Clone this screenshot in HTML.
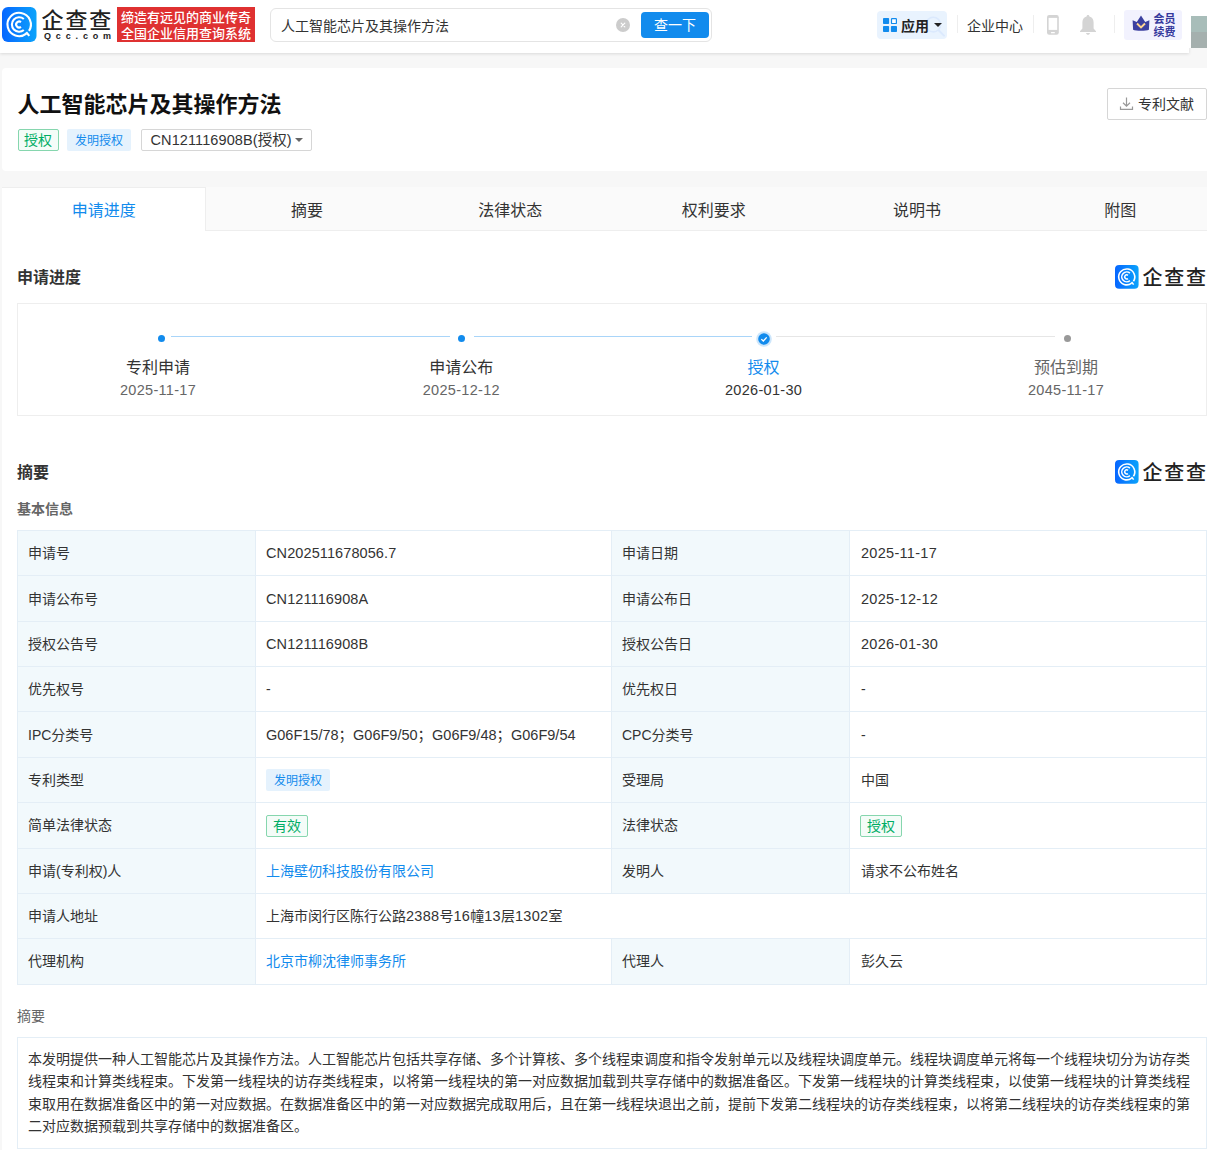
<!DOCTYPE html>
<html lang="zh-CN">
<head>
<meta charset="utf-8">
<title>人工智能芯片及其操作方法 - 企查查</title>
<style>
*{box-sizing:border-box;margin:0;padding:0}
html,body{width:1207px;height:1150px;overflow:hidden;background:#f7f7f7}
body{position:relative;font-family:"Liberation Sans","Noto Sans CJK SC",sans-serif;font-size:14px;color:#333;line-height:1.6}
a{color:#128bed;text-decoration:none}
.abs{position:absolute}
.ls{letter-spacing:.1px;font-size:14.5px}
.ld{letter-spacing:.3px;font-size:14.5px}

/* header */
#hd{position:absolute;left:0;top:0;width:1189px;height:53px;background:#fff;box-shadow:0 1px 3px rgba(0,0,0,.12)}
#hdr{position:absolute;left:1189px;top:0;width:18px;height:48px;background:#fff}
#avatar{position:absolute;left:1191px;top:16px;width:16px;height:32px;background:linear-gradient(#a8bdb9 0,#a8bdb9 50%,#a5b0ae 50%,#a5b0ae 100%)}
#logo-ic{position:absolute;left:2px;top:7px;width:34.5px;height:35px}
#logo-t{position:absolute;left:41.5px;top:3px;font-size:22px;line-height:30px;letter-spacing:1.9px;color:#222;font-family:"Noto Sans CJK SC","Liberation Sans",sans-serif;font-weight:500;transform:scaleY(.96);transform-origin:0 100%;white-space:nowrap}
#logo-s{position:absolute;left:44px;top:30px;font-size:9px;line-height:12px;letter-spacing:4.85px;color:#222;font-weight:bold;white-space:nowrap}
#slogan{position:absolute;left:117px;top:7px;width:138px;height:35px;background:#df3131;color:#fff;font-size:13px;line-height:15.5px;padding:2px 0 0 4px;white-space:nowrap;font-weight:500;font-family:"Noto Sans CJK SC","Liberation Sans",sans-serif}
#sbox{position:absolute;left:270px;top:8px;width:442px;height:34px;border:1px solid #e4e4e4;border-radius:6px;background:#fff}
#sbox .q{position:absolute;left:10px;top:.5px;line-height:33px;font-size:14px;color:#333}
#sbox .x{position:absolute;left:345px;top:9px;width:14px;height:14px;border-radius:50%;background:#ccc}
#sbox .btn{position:absolute;left:370px;top:3px;width:68px;height:26px;border-radius:4px;background:#128bed;color:#fff;text-align:center;line-height:26px;font-size:14px}
#app{position:absolute;left:877px;top:11px;width:70px;height:28px;border-radius:4px;background:#e9f3fe}
#app b{position:absolute;left:24px;top:.5px;line-height:29px;font-size:14px;color:#222}
.vd{position:absolute;top:15px;width:1px;height:18px;background:#eee}
#qyzx{position:absolute;left:967px;top:12px;line-height:29px;font-size:14px;color:#333}
#vip{position:absolute;left:1124px;top:10px;width:58px;height:30px;border-radius:3px;background:#f2f2fe}
#vip .t{position:absolute;left:29.5px;top:2.5px;font-size:11px;line-height:13.2px;font-weight:bold;color:#34389c}

/* title card */
#card{position:absolute;left:2px;top:68px;width:1220px;height:103px;background:#fff;border-radius:4px}
#card h1{position:absolute;left:15.5px;top:20.5px;font-size:22px;line-height:32px;font-weight:bold;color:#111;white-space:nowrap}
.tag-g{display:inline-block;height:22px;line-height:20px;padding:0 5.5px;border:1px solid #86d6ae;border-radius:2px;background:#f4fcf8;color:#00ad65;font-size:14px}
.tag-b{display:inline-block;height:22px;line-height:24px;padding:0 8px;border-radius:2px;background:#e5f2fd;color:#128bed;font-size:12px}
#t1{position:absolute;left:15.5px;top:61px}
#t2{position:absolute;left:65px;top:61px}
#sel{position:absolute;left:139px;top:61px;width:171px;height:22px;border:1px solid #d6d6d6;border-radius:2px;line-height:20px;padding-left:8.5px;font-size:14px;color:#333;white-space:nowrap}
#sel i{position:absolute;left:153px;top:8px;border:4.7px solid transparent;border-top:4.7px solid #666;border-bottom:0}
#dl{position:absolute;left:1105px;top:20px;width:100px;height:32px;border:1px solid #d6d6d6;border-radius:2px;background:#fff}
#dl span{position:absolute;left:30px;top:0;line-height:30px;font-size:14px;color:#333}

/* main */
#main{position:absolute;left:2px;top:187px;width:1220px;height:980px;background:#fff;border-radius:4px 4px 0 0}
#tabs{position:absolute;left:0;top:0;width:1220px;height:44px;background:#fafafa;border-bottom:1px solid #eee;display:flex}
#tabs div{width:203.33px;height:44px;text-align:center;line-height:48px;font-size:16px;color:#333}
#tabs div.on{background:#fff;color:#128bed;height:44px;width:204.33px;margin-right:-1px;border-right:1px solid #eee;border-top:1px solid #eee;line-height:46px;position:relative}
.h2{position:absolute;left:15px;font-size:16px;font-weight:bold;color:#333;line-height:24px}
.wm{position:absolute;left:1113px;width:110px;height:26px}
.wm svg{position:absolute;left:0;top:1px}
.wm span{position:absolute;left:27.5px;top:-2.5px;font-size:20px;line-height:30px;letter-spacing:1.7px;color:#222;font-family:"Noto Sans CJK SC","Liberation Sans",sans-serif;font-weight:500;white-space:nowrap}

#prog{position:absolute;left:15px;top:116px;width:1190px;height:113px;border:1px solid #eee}
.dot{position:absolute;width:7.4px;height:7.4px;border-radius:50%;background:#128bed}
.ln{position:absolute;height:1px;top:148.7px;background:#a9d5f9}
.st{position:absolute;width:200px;text-align:center;white-space:nowrap}
.st .n{font-size:16px;line-height:24px;color:#333}
.st .d{font-size:14.5px;line-height:22px;color:#666;letter-spacing:.3px;margin-top:-1.5px}

.h3{position:absolute;left:15px;font-size:14px;line-height:22px;color:#666}
table{position:absolute;left:15px;top:343px;width:1189px;border-collapse:collapse;table-layout:fixed}
td{height:45.36px;border:1px solid #e4eef6;padding:0 10px 0 10px;font-size:14px;color:#333;line-height:22px;white-space:nowrap;vertical-align:middle}
td.l{background:#f2f9fc;padding-left:10px}
td.r{padding-left:11px}
#abs{position:absolute;left:15px;top:850px;width:1190px;border:1px solid #e4eef6;padding:10px 10px;font-size:14px;line-height:22.4px;color:#333}
</style>
</head>
<body>

<div id="hd"></div>
<div id="hdr"></div>
<div id="avatar"></div>

<svg id="logo-ic" viewBox="0 0 34.3 35" preserveAspectRatio="none">
  <defs><linearGradient id="lg" x1="0" y1="0" x2="1" y2="0"><stop offset="0" stop-color="#0766ff"/><stop offset="1" stop-color="#0ba3fb"/></linearGradient></defs>
  <rect width="34.3" height="35" rx="6" fill="url(#lg)"/>
  <g fill="none" stroke="#fff" stroke-width="2.1"><path d="M24.22 26.68A11.65 11.65 0 1 1 26.82 23.85"/><path d="M21.68 23.02A7.2 7.2 0 1 1 21.68 11.98"/><path d="M18.86 19.9A3 3 0 1 1 18.86 15.1"/><path d="M24.07 25.03L27.12 28.88"/></g>
</svg>
<div id="logo-t">企查查</div>
<div id="logo-s">Qcc.com</div>
<div id="slogan">缔造有远见的商业传奇<br>全国企业信用查询系统</div>

<div id="sbox">
  <span class="q">人工智能芯片及其操作方法</span>
  <span class="x"><svg width="14" height="14" viewBox="0 0 14 14" style="display:block"><path d="M5.2 5.2l3.600 3.600M8.800 5.200L5.200 8.800" stroke="#fff" stroke-width="1.2" stroke-linecap="round"/></svg></span>
  <span class="btn">查一下</span>
</div>

<div id="app">
  <svg class="abs" style="left:44px;top:4px" width="26" height="24" viewBox="0 0 26 24"><circle cx="12.300" cy="9.600" r="7.300" fill="none" stroke="#dbe9fd" stroke-width="1.600"/><path d="M17.600 15.200l5.400 5.400" stroke="#dbe9fd" stroke-width="2" stroke-linecap="round"/></svg>
  <svg class="abs" style="left:6px;top:7px" width="14" height="14" viewBox="0 0 14 14"><rect x="0" y="0" width="6.100" height="6.100" rx=".8" fill="#128bed"/><rect x="8.500" y=".6" width="4.900" height="4.900" rx=".6" fill="#fff" stroke="#128bed" stroke-width="1.200"/><rect x="0" y="7.900" width="6.100" height="6.100" rx=".8" fill="#128bed"/><rect x="7.900" y="7.900" width="6.100" height="6.100" rx=".8" fill="#128bed"/></svg>
  <b>应用</b>
  <i class="abs" style="left:57px;top:12px;border:4px solid transparent;border-top:4.300px solid #222;border-bottom:0"></i>
</div>
<div class="vd" style="left:957px"></div>
<div id="qyzx">企业中心</div>
<div class="vd" style="left:1033px"></div>
<svg class="abs" style="left:1047px;top:15px" width="12" height="20" viewBox="0 0 12 20"><rect x="0" y="0" width="11.8" height="19.8" rx="2.2" fill="#d4d4d4"/><rect x="1.6" y="2.9" width="8.6" height="12" fill="#fff"/><rect x="3.9" y="17.1" width="4" height="1.1" rx=".5" fill="#fff"/></svg>
<svg class="abs" style="left:1080px;top:15px" width="16" height="20" viewBox="0 0 16 20"><path d="M8 0c.9 0 1.400.6 1.400 1.500 2.700.7 4.200 2.900 4.200 5.800v6.300l2.400 2.600v.7H0v-.7l2.400-2.600V7.300c0-2.900 1.500-5.100 4.200-5.800C6.600.6 7.100 0 8 0z" fill="#d4d4d4"/><path d="M6 18h4c-.3 1.100-1 1.800-2 1.800s-1.700-.7-2-1.800z" fill="#d4d4d4"/></svg>
<div class="vd" style="left:1114px"></div>
<div id="vip">
  <svg class="abs" style="left:7.5px;top:5px" width="18" height="17" viewBox="0 0 18 17"><path d="M.6 5.200L4.800 6.900 9 .4l4.200 6.500 4.200-1.700-.5 9.500c-2.400 1.400-13.400 1.400-15.800 0z" fill="#3c40a0"/><path d="M5 8.500l4 4 4-4" fill="none" stroke="#ffd591" stroke-width="1.900"/></svg>
  <div class="t">会员<br>续费</div>
</div>

<div id="card">
  <h1>人工智能芯片及其操作方法</h1>
  <span id="t1" class="tag-g">授权</span>
  <span id="t2" class="tag-b">发明授权</span>
  <div id="sel"><span class="ls">CN121116908B(授权)</span><i></i></div>
  <div id="dl">
    <svg class="abs" style="left:11px;top:7px" width="15" height="15" viewBox="0 0 15 15" fill="none" stroke="#999" stroke-width="1.200"><path d="M7.500 1.500v8.500M4 6.800l3.500 3.400L11 6.800M1.500 10.500v2.800h12v-2.800"/></svg>
    <span>专利文献</span>
  </div>
</div>

<div id="main">
  <div id="tabs"><div class="on">申请进度</div><div>摘要</div><div>法律状态</div><div>权利要求</div><div>说明书</div><div>附图</div></div>

  <div class="h2" style="top:79px">申请进度</div>
  <div class="wm" style="top:77px">
    <svg width="23.6" height="23.8" viewBox="0 0 34.3 35" preserveAspectRatio="none"><rect width="34.3" height="35" rx="6" fill="url(#lg)"/><g fill="none" stroke="#fff" stroke-width="2.3"><path d="M24.22 26.68A11.65 11.65 0 1 1 26.82 23.85"/><path d="M21.68 23.02A7.2 7.2 0 1 1 21.68 11.98"/><path d="M18.86 19.9A3 3 0 1 1 18.86 15.1"/><path d="M24.07 25.03L27.12 28.88"/></g></svg>
    <span>企查查</span>
  </div>

  <div id="prog"></div>
  <div class="ln" style="left:169px;width:278.500px"></div>
  <div class="ln" style="left:472px;width:277.500px"></div>
  <div class="ln" style="left:774px;width:279px;background:#e6e6e6"></div>
  <div class="dot" style="left:155.900px;top:147.800px"></div>
  <div class="dot" style="left:455.800px;top:147.800px"></div>
  <svg class="abs" style="left:754px;top:144px" width="16" height="16" viewBox="0 0 16 16"><circle cx="8" cy="8" r="7.800" fill="#cde6fb"/><circle cx="8" cy="8" r="5.800" fill="#128bed"/><path d="M5.300 8.100l2 1.900 3.400-3.600" fill="none" stroke="#fff" stroke-width="1.300"/></svg>
  <div class="dot" style="left:1061.800px;top:147.700px;background:#999"></div>
  <div class="st" style="left:56px;top:169px"><div class="n">专利申请</div><div class="d">2025-11-17</div></div>
  <div class="st" style="left:359.300px;top:169px"><div class="n">申请公布</div><div class="d">2025-12-12</div></div>
  <div class="st" style="left:661.600px;top:169px"><div class="n" style="color:#128bed">授权</div><div class="d" style="color:#333">2026-01-30</div></div>
  <div class="st" style="left:964px;top:169px"><div class="n" style="color:#666">预估到期</div><div class="d">2045-11-17</div></div>

  <div class="h2" style="top:274px">摘要</div>
  <div class="wm" style="top:272px">
    <svg width="23.6" height="23.8" viewBox="0 0 34.3 35" preserveAspectRatio="none"><rect width="34.3" height="35" rx="6" fill="url(#lg)"/><g fill="none" stroke="#fff" stroke-width="2.3"><path d="M24.22 26.68A11.65 11.65 0 1 1 26.82 23.85"/><path d="M21.68 23.02A7.2 7.2 0 1 1 21.68 11.98"/><path d="M18.86 19.9A3 3 0 1 1 18.86 15.1"/><path d="M24.07 25.03L27.12 28.88"/></g></svg>
    <span>企查查</span>
  </div>
  <div class="h3" style="top:311px;font-weight:bold">基本信息</div>

  <table>
    <colgroup><col style="width:238px"><col style="width:356px"><col style="width:238px"><col style="width:357px"></colgroup>
    <tr><td class="l">申请号</td><td><span class="ls">CN202511678056.7</span></td><td class="l">申请日期</td><td class="r"><span class="ld">2025-11-17</span></td></tr>
    <tr><td class="l">申请公布号</td><td><span class="ls">CN121116908A</span></td><td class="l">申请公布日</td><td class="r"><span class="ld">2025-12-12</span></td></tr>
    <tr><td class="l">授权公告号</td><td><span class="ls">CN121116908B</span></td><td class="l">授权公告日</td><td class="r"><span class="ld">2026-01-30</span></td></tr>
    <tr><td class="l">优先权号</td><td>-</td><td class="l">优先权日</td><td class="r">-</td></tr>
    <tr><td class="l">IPC分类号</td><td><span class="ls" style="letter-spacing:0">G06F15/78；G06F9/50；G06F9/48；G06F9/54</span></td><td class="l">CPC分类号</td><td class="r">-</td></tr>
    <tr><td class="l">专利类型</td><td><span class="tag-b" style="vertical-align:middle;position:relative;top:-1px">发明授权</span></td><td class="l">受理局</td><td class="r">中国</td></tr>
    <tr><td class="l">简单法律状态</td><td><span class="tag-g" style="vertical-align:middle;padding:0 6px">有效</span></td><td class="l">法律状态</td><td class="r"><span class="tag-g" style="vertical-align:middle;padding:0 6px;margin-left:-1px">授权</span></td></tr>
    <tr><td class="l">申请(专利权)人</td><td><a>上海壁仞科技股份有限公司</a></td><td class="l">发明人</td><td class="r">请求不公布姓名</td></tr>
    <tr><td class="l">申请人地址</td><td colspan="3">上海市闵行区陈行公路<span class="ld">2388</span>号<span class="ld">16</span>幢<span class="ld">13</span>层<span class="ld">1302</span>室</td></tr>
    <tr><td class="l">代理机构</td><td><a>北京市柳沈律师事务所</a></td><td class="l">代理人</td><td class="r">彭久云</td></tr>
  </table>

  <div class="h3" style="top:818px">摘要</div>
  <div id="abs">本发明提供一种人工智能芯片及其操作方法。人工智能芯片包括共享存储、多个计算核、多个线程束调度和指令发射单元以及线程块调度单元。线程块调度单元将每一个线程块切分为访存类线程束和计算类线程束。下发第一线程块的访存类线程束，以将第一线程块的第一对应数据加载到共享存储中的数据准备区。下发第一线程块的计算类线程束，以使第一线程块的计算类线程束取用在数据准备区中的第一对应数据。在数据准备区中的第一对应数据完成取用后，且在第一线程块退出之前，提前下发第二线程块的访存类线程束，以将第二线程块的访存类线程束的第二对应数据预载到共享存储中的数据准备区。</div>
</div>

</body>
</html>
